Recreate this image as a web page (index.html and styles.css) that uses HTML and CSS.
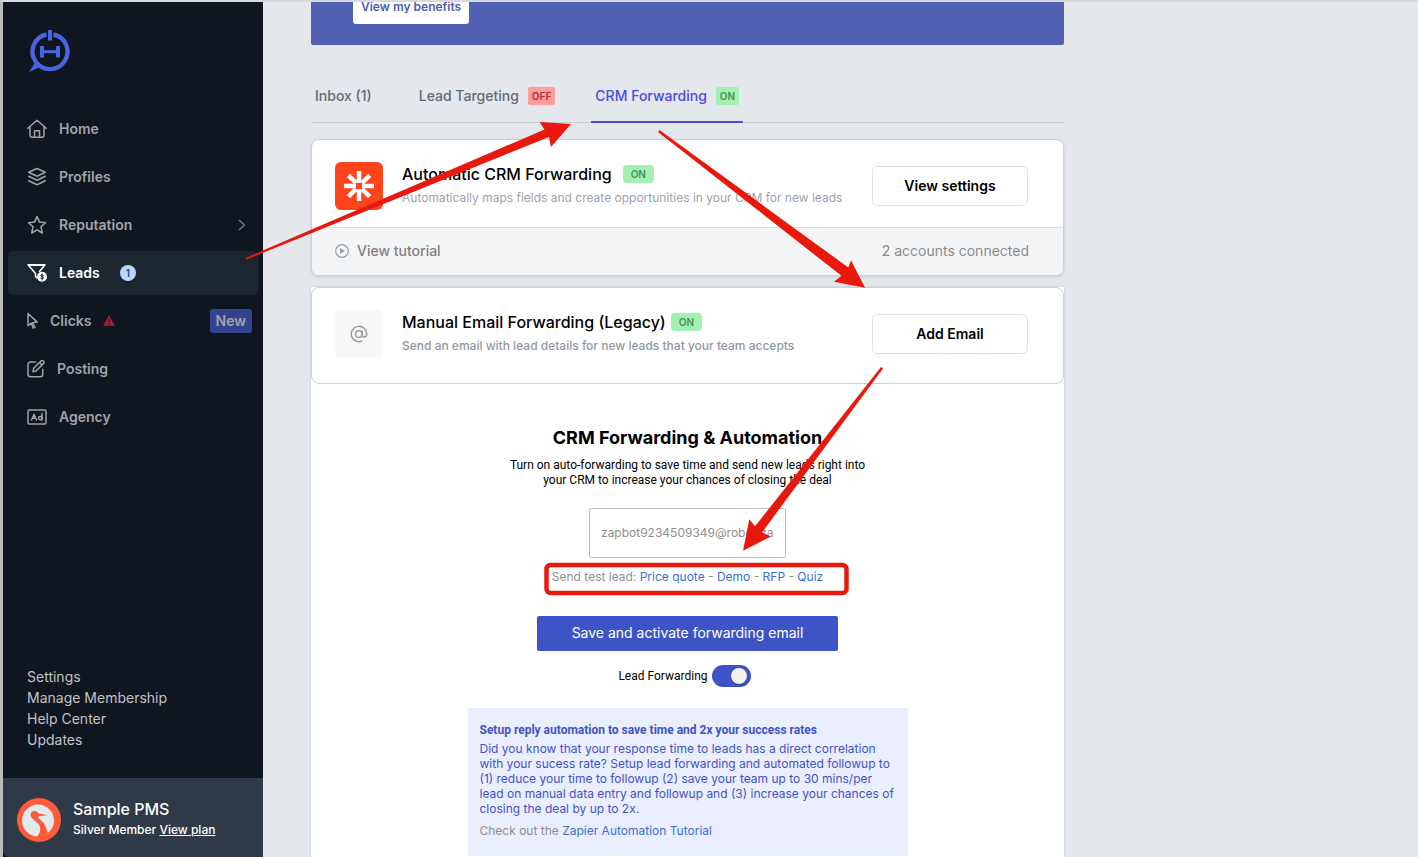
FILE: index.html
```html
<!DOCTYPE html>
<html lang="en">

<head>
    <meta charset="UTF-8">
    <meta name="viewport" content="width=device-width, initial-scale=1.0">
    <title>Leads - CRM Forwarding</title>
    <link rel="stylesheet" href="styles.css">
</head>

<body>
    <div class="app">
        <aside class="sidebar">
            <a href="#" class="logo" aria-label="Dashboard">
                <svg width="44" height="44" viewBox="0 0 44 44" fill="none" stroke="#4664e4">
                    <path d="M18.500 5.500a17.500 17.500 0 1 0 7 0" stroke-width="4.400"/>
                    <path d="M22 1v10.500" stroke-width="4"/>
                    <path d="M14 17v11.500M30 17v11.500" stroke-width="4"/>
                    <path d="M14 22.700h16" stroke-width="3"/>
                    <path d="M7 33.500 1 43.300l11.500-5.800z" fill="#4664e4" stroke="none"/>
                </svg>
            </a>

            <nav class="menu">
                <a href="#" class="menu-item">
                    <svg class="icon" width="20" height="20" viewBox="0 0 20 20">
                        <path d="M.8 9.300 10 1.300l9.200 8M3 7.500v8.800a2 2 0 0 0 2 2h10a2 2 0 0 0 2-2V7.500M7.500 18v-6.200h5V18"/>
                    </svg>
                    <span>Home</span>
                </a>
                <a href="#" class="menu-item">
                    <svg class="icon" width="20" height="20" viewBox="0 0 20 20">
                        <path d="M10 1.500 18.300 5.300 10 9.200 1.700 5.300zM1.700 9.300l8.300 4 8.300-4M1.700 13.800l8.300 4 8.300-4"/>
                    </svg>
                    <span>Profiles</span>
                </a>
                <a href="#" class="menu-item">
                    <svg class="icon" width="20" height="20" viewBox="0 0 20 20">
                        <path d="M10 1.500l2.500 5.600 6 .6-4.500 4.100 1.300 6.200L10 14.900 4.700 18 6 11.800 1.500 7.700l6-.6z"/>
                    </svg>
                    <span>Reputation</span>
                    <svg class="icon chevron" width="8" height="12" viewBox="0 0 8 12"><path d="M1.500 1.500 6.500 6l-5 4.500"/></svg>
                </a>
                <a href="#" class="menu-item active">
                    <svg class="icon" width="20" height="20" viewBox="0 0 20 20">
                        <path d="M1 1.800h17l-5.500 6.700M1 1.800 8.500 10.500v3l1.500 1.500M2 2.300h15"/>
                        <circle cx="15" cy="13.700" r="5" fill="#fff" stroke="none"/>
                        <path d="M16.500 12.300c-.7-.8-2.800-.7-2.800.3 0 1.200 2.900.8 2.900 2.200 0 1-2.200 1.200-3 .2M15.100 10.800v6" stroke="#1c262f" stroke-width="1"/>
                    </svg>
                    <span>Leads</span>
                    <span class="count">1</span>
                </a>
                <a href="#" class="menu-item">
                    <svg class="icon" width="11" height="18" viewBox="0 0 11 18">
                        <path d="M1 1.500v12.300l3-2.700 2.300 5M1 1.500l9.200 8.600-4.700.6L8 15.500"/>
                    </svg>
                    <span>Clicks</span>
                    <svg class="warning" width="12" height="11" viewBox="0 0 12 11">
                        <path d="M6 .3 11.900 10.700H.1z" fill="#a51f2c"/>
                        <path d="M6 3.800v3.300M6 8.300v1.200" stroke="#101620" stroke-width="1.200"/>
                    </svg>
                    <span class="new">New</span>
                </a>
                <a href="#" class="menu-item">
                    <svg class="icon" width="18" height="20" viewBox="0 0 18 20">
                        <path d="M8.500 3H3.500A2.500 2.500 0 0 0 1 5.500v9.800a2.500 2.500 0 0 0 2.500 2.500h9.700a2.500 2.500 0 0 0 2.500-2.500v-5M6 12.800l.7-3.500L14 2a1.600 1.600 0 0 1 2.500 2.500l-7.300 7.400zM12.500 3.500l2.500 2.500"/>
                    </svg>
                    <span>Posting</span>
                </a>
                <a href="#" class="menu-item">
                    <svg class="icon" width="20" height="16" viewBox="0 0 20 16">
                        <rect x="1" y="1" width="18" height="14" rx="1.500"/>
                        <path d="M4.500 11 7 5.300 9.500 11M5.300 9.300h3.400M15 4.500V11" stroke-width="1.500"/>
                        <circle cx="13.200" cy="9.100" r="1.700"/>
                    </svg>
                    <span>Agency</span>
                </a>
            </nav>

            <div class="sidebar-links">
                <a href="#">Settings</a>
                <a href="#">Manage Membership</a>
                <a href="#">Help Center</a>
                <a href="#">Updates</a>
            </div>

            <div class="account">
                <svg width="44" height="44" viewBox="0 0 44 44">
                    <circle cx="22" cy="22" r="22" fill="#ff5b38"/>
                    <circle cx="21" cy="22.500" r="16" fill="#e1e9ec"/>
                    <path d="M13.700 16.500c0-4.500 5.800-4.500 7.600-1.200l9.400 2-9 .9c-1.500 2 2 3.300 4.500 6 2.500 3 3.300 7.500 4.700 11.300L28 40h-9c4-5 5.500-8.500 3.300-13-1.700-3.500-8.600-5.500-8.600-10.500z" fill="#ff5b38"/>
                </svg>
                <div>
                    <div class="account-name">Sample PMS</div>
                    <div class="account-plan">Silver Member <a href="#">View plan</a></div>
                </div>
            </div>
        </aside>

        <main class="main">
            <div class="content">
                <div class="banner">
                    <button type="button" class="btn-benefits">View my benefits</button>
                </div>

                <nav class="tabs">
                    <a href="#" class="tab tab-inbox">Inbox (1)</a>
                    <a href="#" class="tab">Lead Targeting <span class="badge off">OFF</span></a>
                    <a href="#" class="tab selected">CRM Forwarding <span class="badge">ON</span></a>
                </nav>

                <section class="card card-auto">
                    <div class="card-row">
                        <svg class="card-icon" width="48" height="48" viewBox="0 0 48 48">
                            <rect width="48" height="48" rx="6" fill="#ff431b"/>
                            <path d="M24 9v12M24 27v12M9 24h12M27 24h12M13.400 13.400l7.600 7.600M27 27l7.600 7.600M34.600 13.400 27 21M21 27l-7.600 7.600" stroke="#fff" stroke-width="4.500"/>
                            <rect x="21" y="21" width="6" height="6" rx="1" fill="#ff431b"/>
                        </svg>
                        <div class="card-text">
                            <h3>Automatic CRM Forwarding <span class="badge">ON</span></h3>
                            <p>Automatically maps fields and create opportunities in your CRM for new leads</p>
                        </div>
                        <button type="button" class="btn-card">View settings</button>
                    </div>
                    <div class="card-footer">
                        <a href="#">
                            <svg width="14" height="14" viewBox="0 0 14 14">
                                <circle cx="7" cy="7" r="6.300" fill="none" stroke="#929cad" stroke-width="1.200"/>
                                <path d="M5 4.200v5.600L10 7z" fill="#929cad"/>
                            </svg>
                            View tutorial
                        </a>
                        <span>2 accounts connected</span>
                    </div>
                </section>

                <section class="panel">
                    <div class="card card-manual">
                        <div class="card-row">
                            <div class="card-icon at-icon">
                                <svg width="18" height="18" viewBox="0 0 18 18" fill="none" stroke="#9b9b9b" stroke-width="1.500">
                                    <circle cx="9" cy="9" r="3.300"/>
                                    <path d="M12.300 5.700v4.500c0 2.900 4.400 2.500 4.400-1.200a7.700 7.700 0 1 0-4.500 7"/>
                                </svg>
                            </div>
                            <div class="card-text">
                                <h3 class="tight">Manual Email Forwarding (Legacy) <span class="badge">ON</span></h3>
                                <p class="medium">Send an email with lead details for new leads that your team accepts</p>
                            </div>
                            <button type="button" class="btn-card">Add Email</button>
                        </div>
                    </div>

                    <form class="forwarding">
                        <h2>CRM Forwarding &amp; Automation</h2>
                        <p class="intro">Turn on auto-forwarding to save time and send new leads right into<br>your CRM to increase your chances of closing the deal</p>
                        <input type="text" class="email" aria-label="Forwarding email" value="zapbot9234509349@robot.zapier.com">
                        <p class="test-lead">Send test lead: <a href="#">Price quote</a> - <a href="#">Demo</a> - <a href="#">RFP</a> - <a href="#">Quiz</a></p>
                        <button type="button" class="btn-save">Save and activate forwarding email</button>
                        <div class="toggle">
                            <label for="lead-forwarding">Lead Forwarding</label>
                            <input type="checkbox" id="lead-forwarding" checked>
                        </div>
                        <div class="tip">
                            <h4>Setup reply automation to save time and 2x your success rates</h4>
                            <p>Did you know that your response time to leads has a direct correlation<br>with your sucess rate? Setup lead forwarding and automated followup to<br>(1) reduce your time to followup (2) save your team up to 30 mins/per<br>lead on manual data entry and followup and (3) increase your chances of<br>closing the deal by up to 2x.</p>
                            <p class="more">Check out the <a href="#">Zapier Automation Tutorial</a></p>
                        </div>
                    </form>
                </section>
            </div>
        </main>

        <!-- Walkthrough arrows and highlight -->
        <svg class="guide" width="1418" height="857" viewBox="0 0 1418 857" fill="#e8190c">
            <path d="M245.500 258 544.500 129.500 539.500 122l31.500 2-20 23-2-10L246.500 259.500z"/>
            <path d="M659.500 130 848.300 267.500 851 260.300l14 27.500-31-6 7.500-6L658 132z"/>
            <path d="M883 368.500 762 532.500l9 4-28 14.300 6.300-31.500 5.700 7L881 367z"/>
            <rect x="546.500" y="565" width="300" height="28" rx="4" fill="none" stroke="#e8190c" stroke-width="4.500"/>
        </svg>
    </div>
</body>

</html>
```
FILE: styles.css
```css
* {
    box-sizing: border-box;
    margin: 0;
    padding: 0;
}

body {
    font-family: Inter, 'Liberation Sans', sans-serif;
    font-size: 14px;
    color: #000;
    background-color: #e4e7ec;
}

a {
    color: inherit;
    text-decoration: none;
}

button,
input {
    font-family: inherit;
}

.app {
    position: relative;
    display: flex;
    height: 100vh;
    overflow: hidden;
    border-top: 2px solid #d9dadd;
    border-left: 3px solid #bcbcbb;
}

/* Sidebar */
.sidebar {
    display: flex;
    flex-direction: column;
    flex: 0 0 260px;
    background-color: #101620;
}

.logo {
    height: 44px;
    margin: 27px 0 34px 25px;
}

.menu {
    display: flex;
    flex-direction: column;
    gap: 4px;
    padding: 0 5px;
}

.menu-item {
    display: flex;
    align-items: center;
    gap: 12px;
    height: 44px;
    padding: 0 6px 1px 19px;
    border-radius: 5px;
    color: #a1a3a7;
    font-weight: 600;
}

.menu-item.active {
    background-color: #1c262f;
    color: #fff;
}

.icon {
    fill: none;
    stroke: currentColor;
    stroke-width: 1.5;
    stroke-linejoin: round;
    stroke-linecap: round;
}

.chevron {
    margin-left: auto;
    margin-right: 6px;
    opacity: 0.7;
}

.count {
    width: 16px;
    margin-left: 8px;
    border-radius: 8px;
    background-color: #b8d8ff;
    color: #1e4594;
    font-size: 10px;
    line-height: 16px;
    text-align: center;
}

.new {
    margin-left: auto;
    padding: 0 6px;
    border-radius: 3px;
    background-color: #32438f;
    line-height: 24px;
}

.sidebar-links {
    display: flex;
    flex-direction: column;
    margin-top: auto;
    padding: 0 24px 28px;
    color: #c2c3c5;
    line-height: 21px;
}

.account {
    display: flex;
    align-items: center;
    gap: 12px;
    height: 79px;
    padding: 4px 14px 0;
    border-radius: 0 0 0 6px;
    background-color: #303947;
    color: #fff;
}

.account-name {
    font-size: 16px;
    font-weight: 500;
    line-height: 20px;
}

.account-plan {
    font-size: 12px;
    font-weight: 500;
    line-height: 22px;
}

.account-plan a {
    text-decoration: underline;
}

/* Content */
.main {
    flex: 1;
    min-width: 0;
    padding: 0 48px;
}

.content {
    max-width: 753px;
}

.banner {
    display: flex;
    align-items: flex-end;
    height: 43px;
    padding: 0 42px 21px;
    overflow: hidden;
    border-radius: 0 0 2px 2px;
    background-color: #5060b3;
}

.btn-benefits {
    flex-shrink: 0;
    height: 36px;
    padding: 0 8px;
    border: none;
    border-radius: 3px;
    background-color: #fff;
    color: #4c5bae;
    font-size: 12px;
    font-weight: 600;
}

.tabs {
    display: flex;
    gap: 32px;
    height: 78px;
    border-bottom: 1px solid #c8ccd3;
}

.tab {
    display: flex;
    align-items: center;
    gap: 9px;
    height: 78px;
    padding: 24px 4px 0;
    border-bottom: 2px solid transparent;
    color: #626a78;
    font-weight: 500;
}

.tab-inbox {
    margin-right: 7px;
}

.tab.selected {
    border-bottom-color: #4a4be0;
    color: #4a4be0;
}

.badge {
    padding: 0 4px;
    border-radius: 2px;
    background-color: #a3f1b1;
    color: #4b8c5b;
    font-size: 10px;
    font-weight: 600;
    line-height: 18px;
}

.badge.off {
    background-color: #ff9d9d;
    color: #a83238;
}

.tab .badge {
    margin-top: 2px;
}

.card {
    border: 1px solid #ccd0d8;
    border-radius: 8px;
    background-color: #fff;
}

.card-auto {
    margin: 16px 0 11px;
    overflow: hidden;
    box-shadow: 0 1px 3px rgba(40, 50, 80, 0.15);
}

.card-row {
    display: flex;
    align-items: center;
    padding: 22px 35px 17px 23px;
}

.card-manual .card-row {
    padding-bottom: 25px;
}

.card-icon {
    flex: 0 0 48px;
    margin-right: 19px;
}

.at-icon {
    display: flex;
    align-items: center;
    justify-content: center;
    height: 48px;
    border-radius: 5px;
    background-color: #f8f8f8;
}

.card-text {
    flex: 1;
}

.card-text h3 {
    display: flex;
    align-items: center;
    gap: 11px;
    font-size: 16px;
    font-weight: 500;
    line-height: 24px;
}

.card-text h3.tight {
    gap: 5px;
}

.card-text h3 .badge {
    padding: 0 8px;
    border-radius: 4px;
}

.card-text p {
    color: #9ca2ad;
    font-size: 12px;
    line-height: 24px;
}

.card-text .medium {
    color: #8f97a6;
    font-weight: 500;
}

.btn-card {
    flex: 0 0 156px;
    height: 40px;
    padding-bottom: 2px;
    border: 1px solid #e0e2e7;
    border-radius: 5px;
    background-color: #fff;
    color: #000;
    font-size: 14px;
    font-weight: 600;
}

.card-footer {
    display: flex;
    align-items: center;
    justify-content: space-between;
    height: 48px;
    padding: 0 34px 2px 23px;
    border-top: 1px solid #dcdee2;
    background-color: #f4f5f7;
    color: #8a8b8d;
}

.card-footer a {
    display: flex;
    align-items: center;
    gap: 8px;
    color: #7f8184;
    font-weight: 500;
}

.panel {
    background-color: #fff;
    box-shadow: 0 0 2px rgba(40, 50, 80, 0.2);
}

/* Forwarding form */
.forwarding {
    display: flex;
    flex-direction: column;
    align-items: center;
    padding-top: 42px;
    font-size: 12px;
}

.forwarding h2 {
    font-size: 18px;
    font-weight: 700;
    line-height: 24px;
}

.intro {
    margin: 8px 0 20px;
    font-family: Roboto, sans-serif;
    line-height: 15px;
    text-align: center;
}

.email {
    width: 197px;
    height: 50px;
    padding: 0 11px 2px;
    border: 1px solid #c0c0c0;
    border-radius: 2px;
    background-color: #fff;
    color: #8e8e8e;
    font-size: 12px;
}

.test-lead {
    margin: 11px 0 31px;
    color: #8e8e8e;
    line-height: 16px;
}

.test-lead a,
.more a {
    color: #3a6fd6;
}

.btn-save {
    width: 301px;
    height: 35px;
    padding-bottom: 3px;
    border: none;
    border-radius: 2px;
    background-color: #3e54c6;
    color: #fff;
    font-size: 14px;
}

.toggle {
    display: flex;
    align-items: center;
    gap: 4px;
    margin: 14px 6px 21px 0;
    font-family: Roboto, sans-serif;
}

.toggle input {
    display: flex;
    align-items: center;
    justify-content: flex-end;
    appearance: none;
    width: 39px;
    height: 22px;
    padding: 0 4px;
    border-radius: 11px;
    background-color: #3e54c6;
}

.toggle input::before {
    content: '';
    width: 16px;
    height: 16px;
    border-radius: 8px;
    background-color: #f2f2f2;
    box-shadow: 0 1px 2px rgba(0, 0, 0, 0.3);
}

.tip {
    width: 440px;
    height: 148px;
    margin-bottom: 20px;
    padding: 13px 12px;
    background-color: #ebeefe;
    color: #3e54c6;
}

.tip h4 {
    margin-bottom: 2px;
    font-family: Roboto, sans-serif;
    font-size: 12px;
    font-weight: 700;
    line-height: 18px;
}

.tip p {
    line-height: 15px;
    white-space: nowrap;
}

.tip .more {
    margin-top: 7px;
    color: #8e8e8e;
}

.guide {
    position: absolute;
    top: -2px;
    left: -3px;
    pointer-events: none;
}
```
